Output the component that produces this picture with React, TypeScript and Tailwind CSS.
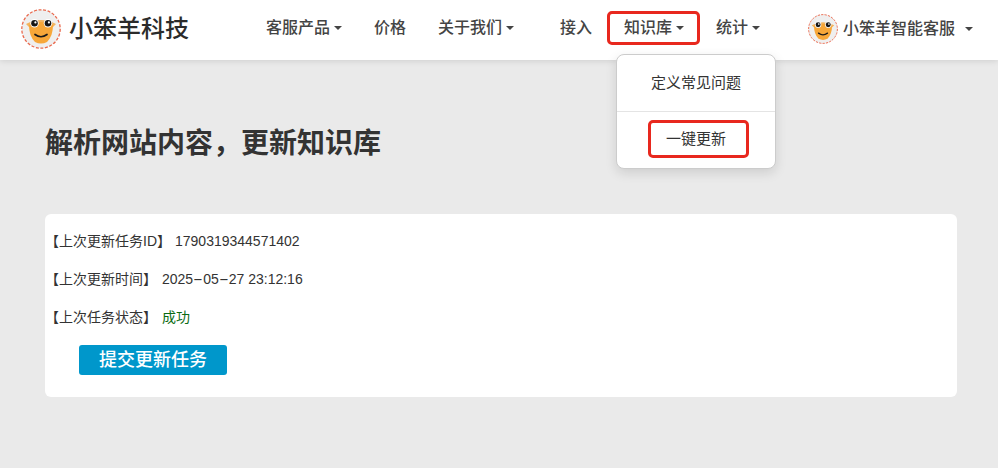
const fontStack = "font-['Liberation_Sans','Noto_Sans_CJK_SC',sans-serif]";

const Logo = ({ size }: { size: number }) => (
  <svg width={size} height={size} viewBox="0 0 40 40" className="shrink-0">
    <circle cx="20" cy="20" r="19.2" fill="#efefef" stroke="#ea6a4e" strokeWidth="1.3" strokeDasharray="3 1.6" />
    <path d="M5 15 Q20 7 35 15 L32 18 Q20 13 8 18 Z" fill="#f3b45e" />
    <path d="M8 16 Q20 10 32 16 Q32 27 26 33 Q20 36 14 33 Q8 27 8 16 Z" fill="#f7a739" />
    <circle cx="13.5" cy="14.3" r="4.2" fill="#fff" />
    <circle cx="27" cy="14.3" r="4.2" fill="#fff" />
    <circle cx="13.5" cy="14.3" r="3.3" fill="#151515" />
    <circle cx="27" cy="14.3" r="3.3" fill="#151515" />
    <circle cx="14.4" cy="13.4" r="1.1" fill="#fff" />
    <circle cx="27.9" cy="13.4" r="1.1" fill="#fff" />
    <path d="M14 25.5 Q20 30 26 25.5" fill="none" stroke="#1a1a1a" strokeWidth="1.7" strokeLinecap="round" />
  </svg>
);

const Caret = () => (
  <span className="ml-1 inline-block h-0 w-0 shrink-0 border-x-4 border-t-4 border-x-transparent border-t-[#444]" />
);

const NavItem = ({ label, caret }: { label: string; caret?: boolean }) => (
  <a className="flex h-[34px] shrink-0 items-center whitespace-nowrap border-[3px] border-transparent px-[13px] text-base font-medium text-[#444]">
    {label}
    {caret && <Caret />}
  </a>
);

const InfoRow = ({ label, children }: { label: string; children: React.ReactNode }) => (
  <div className="flex h-[38px] items-center whitespace-nowrap text-sm text-[#333]">
    <span className="w-[117px] shrink-0">{label}</span>
    {children}
  </div>
);

const Dash = () => <span className="inline-block w-[10px] scale-x-[2.1] text-center">-</span>;

export default function App() {
  return (
    <div className={`h-[468px] w-[998px] overflow-hidden bg-[#eaeaea] ${fontStack}`}>
      <header className="relative flex h-[60px] items-center bg-white pb-[2px] pl-[21px] shadow-[0_1px_6px_rgba(0,0,0,0.12)]">
        <Logo size={40} />
        <span className="ml-[8px] shrink-0 whitespace-nowrap text-2xl font-medium text-[#2b2b2b]">小笨羊科技</span>

        <nav className="mb-[2px] ml-[61px] flex shrink-0 items-center">
          <NavItem label="客服产品" caret />
          <NavItem label="价格" />
          <NavItem label="关于我们" caret />
          <div className="ml-[14px]">
            <NavItem label="接入" />
          </div>
          <div className="relative -ml-px">
            <a className="flex h-[34px] items-center whitespace-nowrap rounded-[5px] border-[3px] border-[#e8281e] pl-[14px] pr-[13px] text-base font-medium text-[#444]">
              知识库
              <Caret />
            </a>
            <div className="absolute left-[9px] top-[43px] z-10 h-[115px] w-[160px] rounded-lg border border-[#ccc] bg-white shadow-[0_4px_12px_rgba(0,0,0,0.12)]">
              <div className="flex h-[57px] items-center justify-center whitespace-nowrap border-b border-[#e4e4e4] text-[15px] text-[#333]">
                定义常见问题
              </div>
              <div className="pl-[31px] pt-[8px]">
                <div className="flex h-[38px] w-[101px] items-center whitespace-nowrap rounded-[5px] border-[3px] border-[#e8281e] pl-[15px] text-[15px] text-[#333]">
                  一键更新
                </div>
              </div>
            </div>
          </div>
          <NavItem label="统计" caret />
        </nav>

        <div className="ml-[32px] flex shrink-0 items-center">
          <Logo size={30} />
          <span className="ml-[5px] whitespace-nowrap text-base font-medium text-[#444]">小笨羊智能客服</span>
          <span className="ml-[10px] inline-block h-0 w-0 border-x-4 border-t-4 border-x-transparent border-t-[#444]" />
        </div>
      </header>

      <main className="px-[45px] pt-[64px]">
        <h1 className="text-[28px] font-semibold leading-[40px] text-[#333]">解析网站内容，更新知识库</h1>
        <section className="mt-[50px] h-[183px] w-[912px] rounded-md bg-white pt-[8px]">
          <InfoRow label="【上次更新任务ID】">
            <span className="ml-[13px]">1790319344571402</span>
          </InfoRow>
          <InfoRow label="【上次更新时间】">
            <span>2025<Dash />05<Dash />27 23:12:16</span>
          </InfoRow>
          <InfoRow label="【上次任务状态】">
            <span className="text-[#0a6b12]">成功</span>
          </InfoRow>
          <button className="ml-[34px] mt-[9px] h-[30px] w-[148px] rounded-[3px] bg-[#0097cb] text-lg font-medium text-white">
            提交更新任务
          </button>
        </section>
      </main>
    </div>
  );
}
